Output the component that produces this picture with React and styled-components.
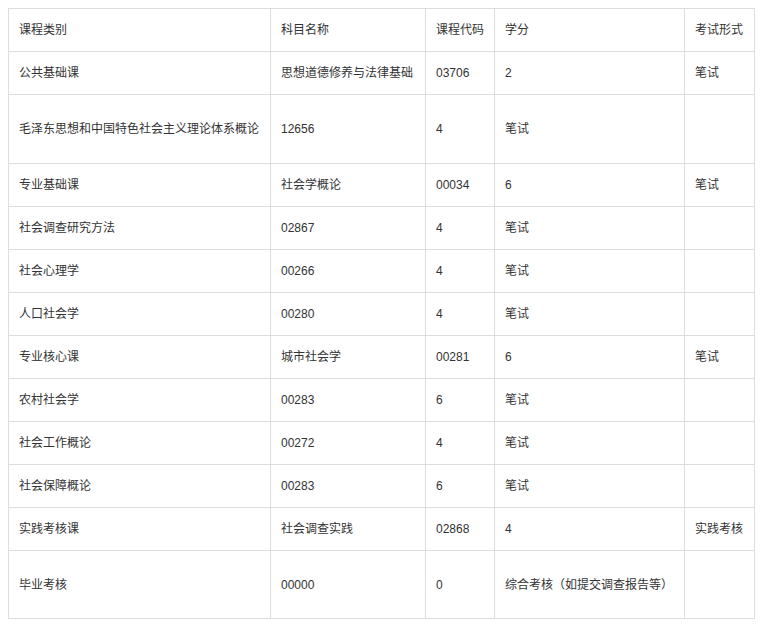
import React from 'react'
import styled, { createGlobalStyle } from 'styled-components'

const GlobalStyle = createGlobalStyle`
  body {
    margin: 8px;
    background: #fff;
    font-family: "Liberation Sans", "Noto Sans CJK SC", sans-serif;
    font-size: 12px;
    color: #333;
  }
`

const Table = styled.table`
  border-collapse: collapse;
  table-layout: fixed;
  width: 746px;
`

const Cell = styled.td`
  border: 1px solid #ddd;
  padding: 0 10px;
  height: ${props => props.$h || 42}px;
  vertical-align: middle;
  white-space: nowrap;
  line-height: 18px;
  text-align: left;
  font-weight: normal;
`

const HeadCell = styled(Cell).attrs({ as: 'th' })``

const widths = [262, 155, 69, 190, 70]

const header = ['课程类别', '科目名称', '课程代码', '学分', '考试形式']

const rows = [
  ['公共基础课', '思想道德修养与法律基础', '03706', '2', '笔试'],
  ['毛泽东思想和中国特色社会主义理论体系概论', '12656', '4', '笔试', ''],
  ['专业基础课', '社会学概论', '00034', '6', '笔试'],
  ['社会调查研究方法', '02867', '4', '笔试', ''],
  ['社会心理学', '00266', '4', '笔试', ''],
  ['人口社会学', '00280', '4', '笔试', ''],
  ['专业核心课', '城市社会学', '00281', '6', '笔试'],
  ['农村社会学', '00283', '6', '笔试', ''],
  ['社会工作概论', '00272', '4', '笔试', ''],
  ['社会保障概论', '00283', '6', '笔试', ''],
  ['实践考核课', '社会调查实践', '02868', '4', '实践考核'],
  ['毕业考核', '00000', '0', '综合考核（如提交调查报告等）', '']
]

// rows that are taller than the rest
const rowHeights = { 1: 68, 11: 67 }

export default function App() {
  return (
    <>
      <GlobalStyle />
      <Table>
        <colgroup>
          {widths.map((w, i) => <col key={i} style={{ width: w }} />)}
        </colgroup>
        <thead>
          <tr>
            {header.map(h => <HeadCell key={h}>{h}</HeadCell>)}
          </tr>
        </thead>
        <tbody>
          {rows.map((row, idx) => (
            <tr key={idx}>
              {row.map((c, j) => (
                <Cell key={j} $h={rowHeights[idx]}>{c}</Cell>
              ))}
            </tr>
          ))}
        </tbody>
      </Table>
    </>
  )
}
